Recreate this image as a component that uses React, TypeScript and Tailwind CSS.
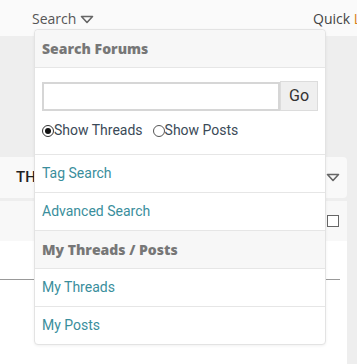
import React from "react";

const Caret = ({ className }: { className?: string }) => (
  <svg viewBox="0 0 14 9" className={className} fill="none">
    <path d="M1.5 1.5h11L7 7.5z" stroke="currentColor" strokeWidth="1.6" strokeLinejoin="round" />
  </svg>
);

const poppins = { fontFamily: '"Open Sans", "Noto Sans", sans-serif' };
const roboto = { fontFamily: "Roboto, Arial, sans-serif" };

const MenuLink = ({ label }: { label: string }) => (
  <div className="h-[38px] flex items-center px-[7px] border-t border-[#e6e6e6] text-[14px] text-[#3a8e9c]" style={roboto}>
    {label}
  </div>
);

const MenuHeader = ({ label, top }: { label: string; top?: boolean }) => (
  <div
    className={`h-[38px] flex items-center px-[7px] bg-[#f7f7f7] text-[14px] font-extrabold text-[#777] ${top ? "rounded-t-[4px] border-b border-[#e6e6e6]" : "border-t border-[#e6e6e6]"}`}
    style={poppins}
  >
    {label}
  </div>
);

export default function App() {
  return (
    <div className="relative w-[357px] h-[364px] overflow-hidden bg-[#eeeeee]">
      {/* top nav */}
      <div className="h-[36px] bg-[#fafafa] flex items-center text-[14px] pl-[32px]" style={poppins}>
        <div className="w-[281px] shrink-0 flex items-center gap-[4px] text-[#555]">
          <span>Search</span>
          <Caret className="w-[14px] h-[9px] text-[#666] mt-[2px]" />
        </div>
        <div className="shrink-0 text-[#444] whitespace-nowrap">
          Quick <span className="text-[#d9801a]">Links</span>
        </div>
      </div>

      {/* page content behind the menu */}
      <div className="pt-[121px] w-[347px]">
        <div className="h-[41px] bg-[#f9f9f9] rounded-r-[4px] flex items-center pl-[16px] pr-[7px]">
          <span className="text-[15px] font-medium text-[#222]" style={roboto}>THREADS</span>
          <Caret className="ml-auto w-[14px] h-[9px] text-[#666]" />
        </div>
        <div className="mt-[3px] rounded-tr-[4px] bg-white">
          <div className="h-[40px] bg-[#f8f8f8] flex items-center justify-end pr-[8px]">
            <div className="w-[12px] h-[12px] border border-[#666] bg-white" />
          </div>
          <div className="h-[124px] pt-[38px] pr-[7px]">
            <div className="h-px bg-[#999]" />
          </div>
        </div>
      </div>

      {/* dropdown */}
      <div className="absolute left-[34px] top-[29px] w-[292px] bg-white border border-[#e3e3e3] rounded-[4px] shadow-[0_1px_3px_rgba(0,0,0,0.06)]">
        <MenuHeader label="Search Forums" top />
        <div className="h-[86px] px-[7px] pt-[13px]">
          <div className="flex items-start">
            <div className="w-[240px] h-[29px] mt-px border-2 border-[#d6d6d6] bg-white" />
            <button
              className="w-[38px] h-[30px] bg-[#efefef] border border-[#dcdcdc] text-[16px] text-[#333] flex items-center justify-center"
              style={roboto}
            >
              Go
            </button>
          </div>
          <div className="mt-[9px] flex items-center text-[14px] text-[#3b4a57]" style={roboto}>
            <span className="w-[12px] h-[12px] rounded-full border border-[#333] flex items-center justify-center">
              <span className="w-[6px] h-[6px] rounded-full bg-[#111]" />
            </span>
            <span>Show Threads</span>
            <span className="ml-[10px] w-[12px] h-[12px] rounded-full border border-[#555]" />
            <span>Show Posts</span>
          </div>
        </div>
        <MenuLink label="Tag Search" />
        <MenuLink label="Advanced Search" />
        <MenuHeader label="My Threads / Posts" />
        <MenuLink label="My Threads" />
        <MenuLink label="My Posts" />
      </div>
    </div>
  );
}
